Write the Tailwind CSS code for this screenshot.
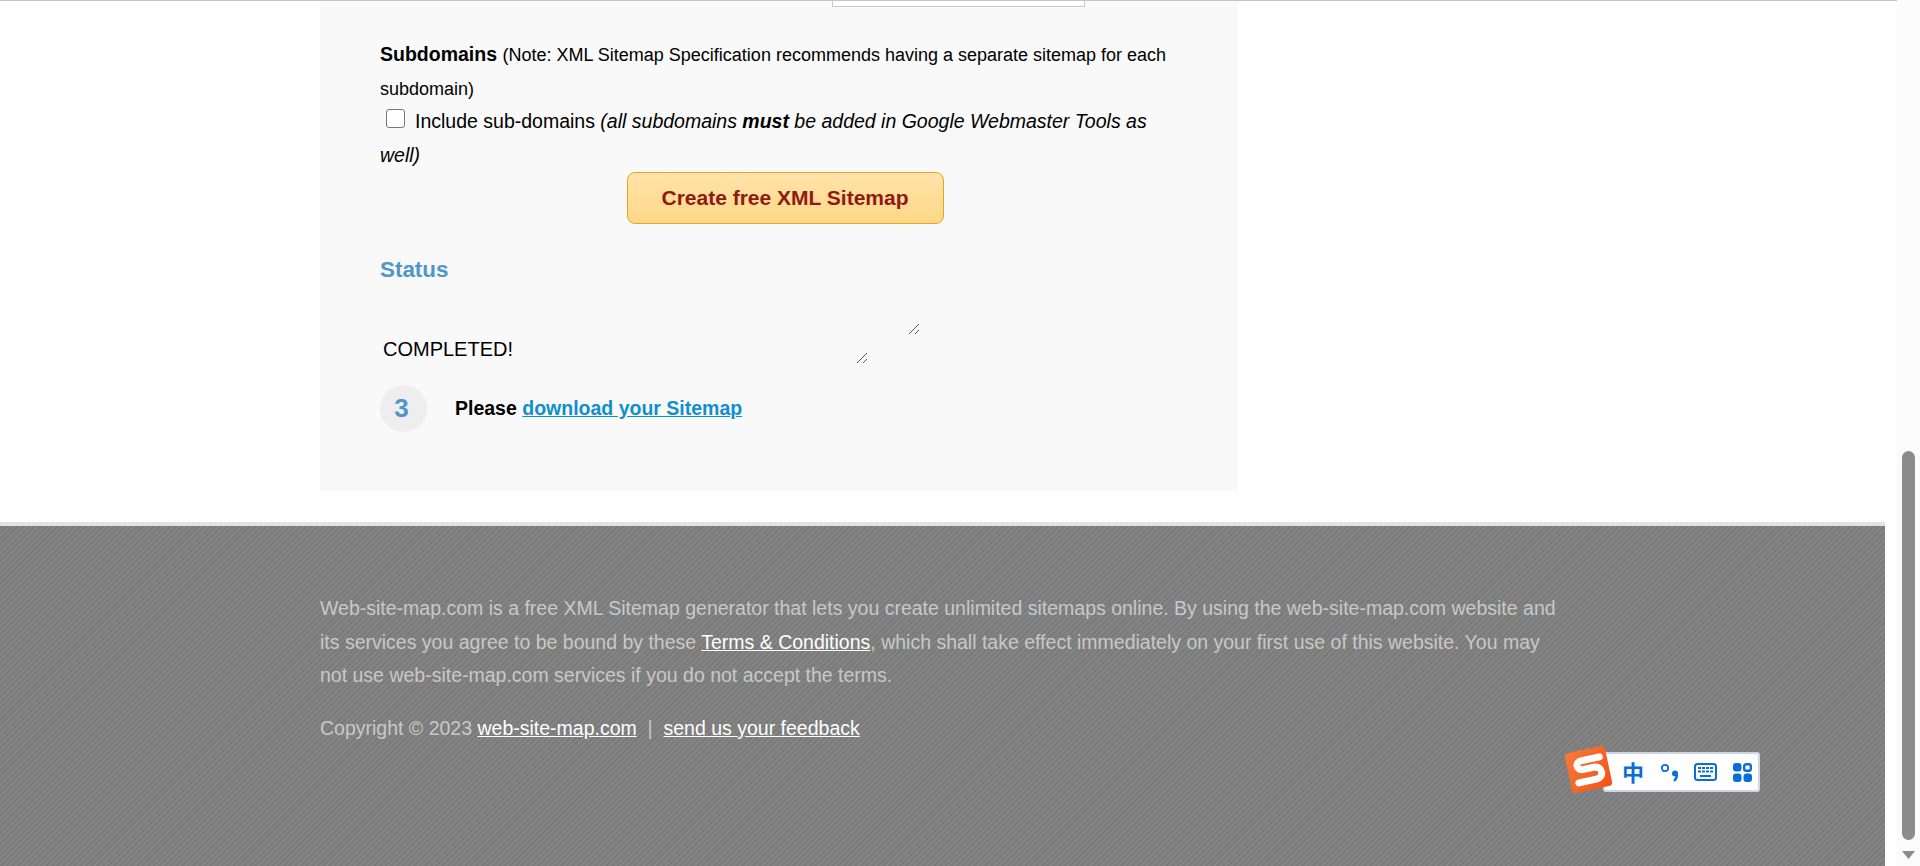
<!DOCTYPE html>
<html lang="en">
  <head>
    <meta charset="UTF-8" />
    <title>Web-site-map.com</title>
    <script src="https://cdn.jsdelivr.net/npm/@tailwindcss/browser@4"></script>
  </head>
  <body class="bg-white h-[866px] overflow-hidden font-['Liberation_Sans',Arial,sans-serif] relative">
    <div class="flex h-[866px]">
      <div class="w-[1897px] shrink-0 flex flex-col">
        <div class="h-px bg-[#c4c4c4] w-[1897px]"></div>
        <!-- form panel -->
        <div class="ml-[320px] w-[918px] h-[490px] bg-[#f9f9f9] px-[60px] relative shrink-0">
          <div class="absolute left-[512px] top-0 w-[253px] h-[6px] bg-white border border-t-0 border-[#c8c8c8]"></div>
          <div class="pt-[37px] text-[19.5px] leading-[33.5px] text-black w-[800px]">
            <p><b>Subdomains</b> <span class="text-[18px] leading-[20px]">(Note: XML Sitemap Specification recommends having a separate sitemap for each subdomain)</span></p>
            <p>
              <span class="inline-block w-[19px] h-[19px] ml-[6px] mr-[10px] align-[0px] bg-white border-[1.5px] border-[#767676] rounded-[3px]"></span>Include sub-domains <i>(all subdomains <b>must</b> be added in Google Webmaster Tools as well)</i>
            </p>
          </div>
          <div class="flex justify-center w-[800px]">
            <button class="w-[317px] h-[52px] ml-[10px] rounded-[8px] border border-[#e8a520] bg-gradient-to-b from-[#ffe3a9] to-[#ffd886] text-[#8f1a14] font-bold text-[21px]">Create free XML Sitemap</button>
          </div>
          <h2 class="mt-[33px] text-[22.4px] leading-[26px] font-bold text-[#4f96c8]">Status</h2>
          <p class="mt-[54px] ml-[3px] text-[20px] leading-[24px] text-black">COMPLETED!</p>
          <div class="flex items-center mt-[24px]">
            <span class="w-[47px] h-[47px] pr-[4px] rounded-full bg-[#eeeeee] text-[#4f96c8] font-bold text-[26px] flex items-center justify-center">3</span>
            <p class="ml-[28px] text-[19.5px] font-bold text-black">Please <a href="#" class="text-[#0f8fcf] underline">download your Sitemap</a></p>
          </div>
          <svg class="absolute left-[588px] top-[322px]" width="12" height="12" viewBox="0 0 12 12" fill="none" stroke="#555" stroke-width="1"><path d="M1 11 11 1M7 11l4-4"/></svg>
          <svg class="absolute left-[536px] top-[351px]" width="12" height="12" viewBox="0 0 12 12" fill="none" stroke="#555" stroke-width="1"><path d="M1 11 11 1M7 11l4-4"/></svg>
        </div>
        <div class="h-[31px] shrink-0"></div>
        <!-- footer -->
        <footer class="w-[1885px] flex-1 border-t-[4px] border-[#e2e2e2] bg-[#7f7f7f] bg-[repeating-linear-gradient(135deg,#7b7b7b_0,#7b7b7b_2px,#848484_2px,#848484_4px)] px-[320px] pt-[66px] text-[19.5px] leading-[33.5px] text-[#c8c8c8]">
          <p class="w-[1245px]">Web-site-map.com is a free XML Sitemap generator that lets you create unlimited sitemaps online. By using the web-site-map.com website and its services you agree to be bound by these <a href="#" class="text-white underline">Terms &amp; Conditions</a>, which shall take effect immediately on your first use of this website. You may not use web-site-map.com services if you do not accept the terms.</p>
          <p class="mt-[19px]">Copyright © 2023 <a href="#" class="text-white underline">web-site-map.com</a> &nbsp;|&nbsp; <a href="#" class="text-white underline">send us your feedback</a></p>
        </footer>
      </div>
      <!-- scrollbar -->
      <div class="w-[23px] bg-[#fbfbfb] relative">
        <div class="absolute left-[5px] top-[451px] w-[13px] h-[389px] rounded-full bg-[#8b8b8b]"></div>
        <svg class="absolute left-[5px] top-[851px]" width="13" height="8" viewBox="0 0 13 8"><path d="M0 0h13L6.500 8z" fill="#8b8b8b"/></svg>
      </div>
    </div>
    <!-- input method bar -->
    <div class="absolute left-[1603px] top-[752px] w-[157px] h-[40px] bg-white rounded-[3px] border-2 border-[#cdd6e4] flex items-center pl-[17px] gap-[15.5px] text-[#0a6ed8]">
      <span class="text-[22px] w-[22px] leading-none mb-[2px] font-bold font-['Noto_Sans_CJK_SC',sans-serif]">中</span>
      <svg width="19" height="20" viewBox="0 0 19 20" fill="none" stroke="currentColor"><circle cx="5" cy="6" r="3.200" stroke-width="1.800"/><circle cx="15" cy="11.500" r="3" fill="currentColor" stroke="none"/><path d="M17 12c.3 3-.8 5-3 7" stroke-width="2.200"/></svg>
      <svg width="23" height="18" viewBox="0 0 23 18"><rect x="1" y="1" width="21" height="16" rx="2.500" fill="none" stroke="currentColor" stroke-width="2"/><path d="M4 4h3v2H4zM8 4h3v2H8zM12 4h3v2h-3zM16 4h3v2h-3zM4 7.500h3v2H4zM8 7.500h3v2H8zM12 7.500h3v2h-3zM16 7.500h3v2h-3zM6 12h11v2H6z" fill="currentColor"/></svg>
      <svg width="19" height="19" viewBox="0 0 19 19" fill="currentColor"><rect x="0" y="0" width="8.500" height="8.500" rx="3"/><rect x="11.200" y="1.200" width="6.600" height="6.600" rx="2" fill="none" stroke="currentColor" stroke-width="2.400"/><rect x="0" y="10.500" width="8.500" height="8.500" rx="3"/><rect x="10.500" y="10.500" width="8.500" height="8.500" rx="3"/></svg>
    </div>
    <div class="absolute left-[1568px] top-[748.500px] w-[41px] h-[41px] rounded-[4px] rotate-[-12deg] bg-gradient-to-br from-[#f47a3a] to-[#f5500f] flex items-center justify-center">
      <svg width="34" height="30" viewBox="0 0 32 28" fill="none" stroke="#fff" stroke-linecap="round"><path d="M28 4H11C4 4 4 12 10 12.500h12C29 13.500 29 24 21 24H4" stroke-width="6.500"/></svg>
    </div>
  </body>
</html>
